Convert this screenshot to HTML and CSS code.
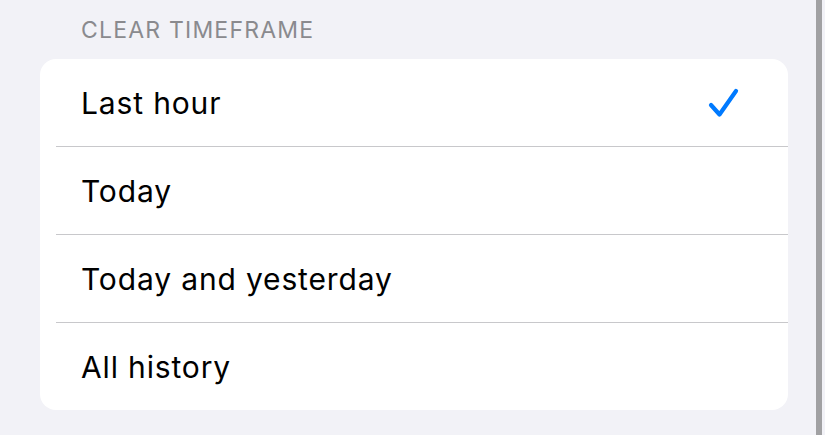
FILE: index.html
```html
<!DOCTYPE html>
<html>
<head>
<meta charset="utf-8">
<title>Clear Timeframe</title>
<link rel="stylesheet" href="styles.css">
</head>
<body>
<div class="page">
  <div class="content">
    <div class="section-title">CLEAR TIMEFRAME</div>
    <div class="card">
      <div class="row">
        <span class="label">Last hour</span>
        <svg class="check" width="32" height="31" viewBox="0 0 32 31">
          <path d="M3 17 L11.5 26.5 L28 3" fill="none" stroke="#007aff" stroke-width="4.2" stroke-linecap="round" stroke-linejoin="round"/>
        </svg>
      </div>
      <div class="row"><span class="label">Today</span></div>
      <div class="row"><span class="label">Today and yesterday</span></div>
      <div class="row"><span class="label">All history</span></div>
    </div>
  </div>
  <div class="scrollbar"></div>
</div>
</body>
</html>
```

FILE: styles.css
```css
html, body {
   margin: 0;
   padding: 0;
   background-color: #f2f2f7;
   font-family: Inter, "Noto Sans", sans-serif;
}

.page {
   display: flex;
   height: 435px;
}

.content {
   flex: 1;
   padding-left: 40px;
}

.section-title {
   height: 59px;
   padding-left: 41px;
   box-sizing: border-box;
   padding-top: 16px;
   font-size: 23px;
   color: #8a8a8e;
   letter-spacing: 1.2px;
}

.card {
   width: 748px;
   background: #ffffff;
   border-radius: 16px;
   overflow: hidden;
}

.row {
   display: flex;
   align-items: center;
   justify-content: space-between;
   height: 87px;
   margin-left: 16px;
   padding-left: 25px;
   padding-right: 48px;
   border-top: 1px solid #c8c8cb;
}

.row:first-child {
   border-top: none;
}

.label {
   font-size: 30px;
   color: #000000;
   letter-spacing: 0.85px;
}

.check {
   display: block;
   margin-top: 2px;
}

.scrollbar {
   width: 6px;
   margin-right: 3px;
   background: #a1a1a3;
}
```
